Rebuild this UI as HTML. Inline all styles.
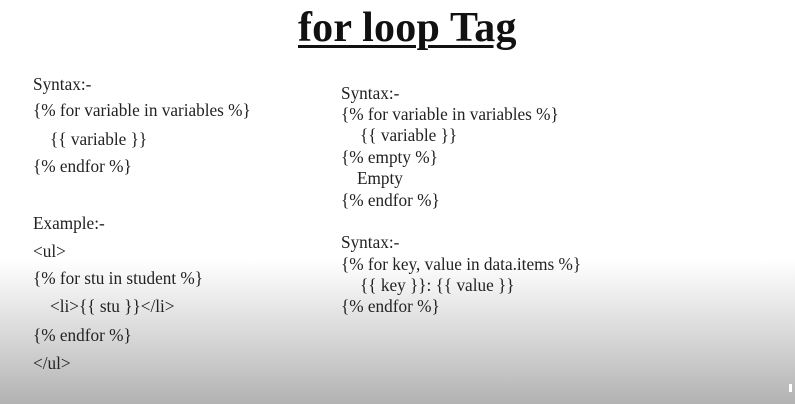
<!DOCTYPE html>
<html><head><meta charset="utf-8"><style>
html,body{margin:0;padding:0;}
body{width:795px;height:404px;position:relative;overflow:hidden;
background:linear-gradient(to bottom,#fff 0,#fff 260px,#d6d6d6 340px,#b2b2b2 404px);
font-family:"Liberation Serif",serif;color:#222;}
.t{position:absolute;left:298px;top:4px;font-size:42px;font-weight:bold;text-decoration:underline;text-decoration-thickness:3px;text-underline-offset:4px;color:#111;white-space:nowrap;letter-spacing:0.2px}
.l{position:absolute;font-size:17.4px;white-space:nowrap;line-height:20px;transform:scaleX(0.99);transform-origin:left center}
</style></head><body>
<div class="t">for loop Tag</div>
<div class="l" style="left:33px;top:74px">Syntax:-</div>
<div class="l" style="left:33px;top:100px">{% for variable in variables %}</div>
<div class="l" style="left:50px;top:129px">{{ variable }}</div>
<div class="l" style="left:33px;top:156px">{% endfor %}</div>
<div class="l" style="left:33px;top:213px">Example:-</div>
<div class="l" style="left:33px;top:241px">&lt;ul&gt;</div>
<div class="l" style="left:33px;top:268px">{% for stu in student %}</div>
<div class="l" style="left:50px;top:296px">&lt;li&gt;{{ stu }}&lt;/li&gt;</div>
<div class="l" style="left:33px;top:325px">{% endfor %}</div>
<div class="l" style="left:33px;top:353px">&lt;/ul&gt;</div>

<div class="l" style="left:341px;top:83px">Syntax:-</div>
<div class="l" style="left:341px;top:104px">{% for variable in variables %}</div>
<div class="l" style="left:360px;top:125px">{{ variable }}</div>
<div class="l" style="left:341px;top:147px">{% empty %}</div>
<div class="l" style="left:357px;top:168px">Empty</div>
<div class="l" style="left:341px;top:190px">{% endfor %}</div>
<div class="l" style="left:341px;top:232px">Syntax:-</div>
<div class="l" style="left:341px;top:254px">{% for key, value in data.items %}</div>
<div class="l" style="left:360px;top:275px">{{ key }}: {{ value }}</div>
<div class="l" style="left:341px;top:296px">{% endfor %}</div>
<div style="position:absolute;left:789px;top:384px;width:3px;height:8px;background:#fff"></div>
</body></html>
